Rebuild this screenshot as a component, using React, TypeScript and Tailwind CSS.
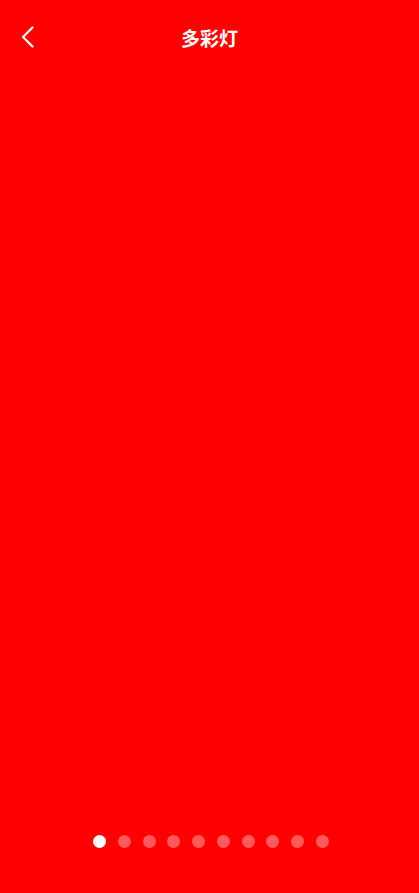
const pages = Array.from({ length: 10 }, (_, i) => i)

export default function App() {
  return (
    <div className="w-full h-[893px] bg-[#ff0000] flex flex-col" style={{ fontFamily: '"Noto Sans CJK SC", "Noto Sans", sans-serif' }}>
      {/* ヘッダー */}
      <div className="relative h-[74px] flex items-center justify-center">
        <button className="absolute left-[20px] top-[26px] text-white">
          <svg width="14" height="22" viewBox="0 0 14 22" fill="none" stroke="currentColor" strokeWidth="2.2" strokeLinecap="round" strokeLinejoin="round">
            <polyline points="12.5,1.5 3,11 12.5,20.5" />
          </svg>
        </button>
        <h1 className="text-white text-[19px] font-bold leading-none">多彩灯</h1>
      </div>

      <div className="flex-1" />

      {/* ページインジケーター */}
      <div className="flex justify-center gap-[11.7px] pb-[45px] pl-[3px]">
        {pages.map(i => (
          <span
            key={i}
            className={`w-[13px] h-[13px] rounded-full ${i === 0 ? 'bg-white' : 'bg-white/35'}`}
          />
        ))}
      </div>
    </div>
  )
}
